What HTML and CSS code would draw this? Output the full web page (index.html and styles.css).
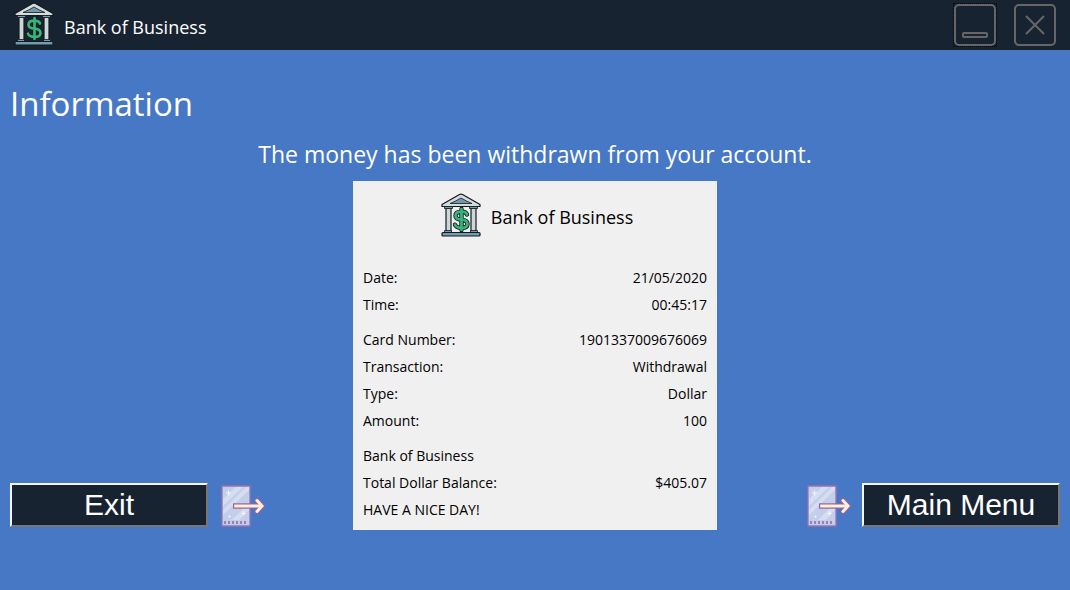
FILE: index.html
```html
<!DOCTYPE html>
<html lang="en">
<head>
<meta charset="utf-8">
<title>Bank of Business</title>
<link rel="stylesheet" href="styles.css">
</head>
<body>
<svg class="symbols" aria-hidden="true">
  <symbol id="bank" viewBox="0 0 40 44">
    <g stroke="#15191d" stroke-width="1.2" stroke-linejoin="round">
      <path fill="#d3dddd" d="M1 11.500 18.500 1.500q1.500-.8 3 0L39 11.500V13.500H1z"/>
      <path fill="#6f9aae" stroke-width=".8" d="M9 10.500q5-2 11-5.500 6 3.500 11 5.500z"/>
      <path fill="#cbd7d8" d="M5 15h5v24H5zM30 15h5v24h-5z"/>
      <path fill="#719db0" stroke-width=".8" d="M3.500 13.500h8V15.500h-8zM28.500 13.500h8V15.500h-8zM3.500 37.500h7v2h-7zM29.500 37.500h7v2h-7z"/>
      <path fill="#719db0" d="M2 39.500h36q1 0 1 1v1.500q0 1-1 1H2q-1 0-1-1v-1.500q0-1 1-1z"/>
    </g>
    <g fill="none" stroke-linecap="round">
      <path stroke="#15191d" stroke-width="4.400" d="M20.500 16v21M26 21.500q-1-2.800-5.500-2.800-6 0-6 4 0 3.500 6 4 6 .6 6 4.200 0 4-6 4-5.500 0-6.500-3.200"/>
      <path stroke="#35b57c" stroke-width="2.700" d="M20.500 16v21M26 21.500q-1-2.800-5.500-2.800-6 0-6 4 0 3.500 6 4 6 .6 6 4.200 0 4-6 4-5.500 0-6.500-3.200"/>
    </g>
  </symbol>
  <symbol id="leave" viewBox="0 0 44 42">
    <path fill="#c3cfea" stroke="#9b72b0" stroke-width="1.300" d="M1 1h28v40H1z"/>
    <path fill="#d5def1" d="M2 14 15 2h7L2 21zM2 25 25 2h3v3L2 30zM11 35 28 18v7L18 35z"/>
    <path fill="none" stroke="#f3f5fc" stroke-width="1.200" d="M7.500 5.500v5M5 8h5M22.500 26.500v4M20.500 28.500h4M8.500 30.500v2M7.500 31.500h2"/>
    <path fill="none" stroke="#865fa3" stroke-width="1.400" d="M4 36v3M8 36v3M12 36v3M16 36v3M20 36v3M24 36v3"/>
    <path fill="none" stroke="#9b6492" stroke-width="5.400" d="M12 21h29"/>
    <path fill="none" stroke="#9b6492" stroke-width="5" stroke-linecap="round" d="m36 15.500 5 5.500-5 5.500"/>
    <path fill="none" stroke="#fff0df" stroke-width="3" d="M13.200 21H40"/>
    <path fill="none" stroke="#fff0df" stroke-width="3" stroke-linecap="round" d="m36 15.500 5 5.500-5 5.500"/>
  </symbol>
</svg>
<header class="titlebar">
  <svg class="titlebar-logo" aria-hidden="true"><use href="#bank"/></svg>
  <span class="brand">Bank of Business</span>
  <div class="window-buttons">
    <button class="window-button focused" type="button" aria-label="Minimize">
      <svg viewBox="0 0 44 44"><rect x="2" y="2" width="40" height="40" rx="4"/><rect x="10" y="30" width="24" height="4" rx="1"/></svg>
    </button>
    <button class="window-button" type="button" aria-label="Close">
      <svg viewBox="0 0 44 44"><rect x="2" y="2" width="40" height="40" rx="4"/><path d="m13 13 18 18M31 13 13 31"/></svg>
    </button>
  </div>
</header>
<main class="page">
  <h1 class="heading">Information</h1>
  <p class="message">The money has been withdrawn from your account.</p>
  <div class="content">
    <div class="action">
      <button class="action-button" type="button">Exit</button>
      <svg class="action-icon" aria-hidden="true"><use href="#leave"/></svg>
    </div>
    <section class="receipt">
      <div class="receipt-head">
        <svg class="receipt-logo" aria-hidden="true"><use href="#bank"/></svg>
        <span class="brand">Bank of Business</span>
      </div>
      <table class="lines">
        <tbody>
          <tr><td>Date:</td><td>21/05/2020</td></tr>
          <tr><td>Time:</td><td>00:45:17</td></tr>
        </tbody>
        <tbody>
          <tr class="group-start"><td>Card Number:</td><td>1901337009676069</td></tr>
          <tr><td>Transaction:</td><td>Withdrawal</td></tr>
          <tr><td>Type:</td><td>Dollar</td></tr>
          <tr><td>Amount:</td><td>100</td></tr>
        </tbody>
        <tbody>
          <tr class="group-start"><td colspan="2">Bank of Business</td></tr>
          <tr><td>Total Dollar Balance:</td><td>$405.07</td></tr>
          <tr><td colspan="2">HAVE A NICE DAY!</td></tr>
        </tbody>
      </table>
    </section>
    <div class="action action-right">
      <svg class="action-icon" aria-hidden="true"><use href="#leave"/></svg>
      <button class="action-button" type="button">Main Menu</button>
    </div>
  </div>
</main>
</body>
</html>
```

FILE: styles.css
```css
* {
  box-sizing: border-box;
}

body {
  margin: 0;
  min-height: 100vh;
  background: #4778c6;
  color: #fff;
  font-family: "Segoe UI", "Open Sans", "Noto Sans", sans-serif;
}

.symbols {
  position: absolute;
  width: 0;
  height: 0;
}

.titlebar {
  display: flex;
  align-items: center;
  height: 50px;
  padding: 0 13px 0 14px;
  background: #182332;
}

.titlebar-logo {
  width: 40px;
  height: 44px;
  margin: 0 10px 2px 0;
}

.brand {
  padding-top: 4px;
  font-size: 18px;
  line-height: 28px;
}

.window-buttons {
  display: flex;
  gap: 16px;
  margin-left: auto;
}

.window-button {
  width: 44px;
  height: 44px;
  padding: 0;
  border: 0;
  background: none;
}

.window-button.focused {
  outline: 1px dotted #05070b;
  outline-offset: -1px;
}

.window-button svg {
  display: block;
  fill: none;
  stroke: #666;
  stroke-width: 2;
}

.page {
  padding: 30px 10px;
}

.heading {
  margin: 0;
  font-size: 33px;
  font-weight: 400;
  line-height: 48px;
}

.message {
  margin: 10px 0;
  font-size: 23px;
  line-height: 33px;
  text-align: center;
}

.content {
  display: grid;
  grid-template-columns: 1fr 364px 1fr;
  align-items: end;
}

.action {
  display: flex;
  align-items: flex-end;
  gap: 13px;
  padding-bottom: 3px;
}

.action-right {
  justify-content: flex-end;
  gap: 11px;
}

.action-button {
  width: 198px;
  height: 44px;
  padding: 0;
  border: 2px solid;
  border-color: #f4f4f4 #777 #777 #f4f4f4;
  background: #182332;
  color: #fff;
  font: 30px/36px "Liberation Sans", Arial, sans-serif;
}

.action-icon {
  width: 44px;
  height: 42px;
}

.receipt {
  padding: 11px 10px 7px;
  background: #f0f0f0;
  color: #000;
}

.receipt-head {
  display: flex;
  align-items: center;
  justify-content: center;
  gap: 10px;
  height: 46px;
  margin-bottom: 26px;
  padding-left: 4px;
}

.receipt-logo {
  width: 40px;
  height: 46px;
}

.lines {
  width: 100%;
  border-collapse: collapse;
  font-size: 14px;
  line-height: 27px;
}

.lines td {
  padding: 0;
}

.lines td:nth-child(2) {
  text-align: right;
}

.lines .group-start td {
  padding-top: 8px;
}
```
